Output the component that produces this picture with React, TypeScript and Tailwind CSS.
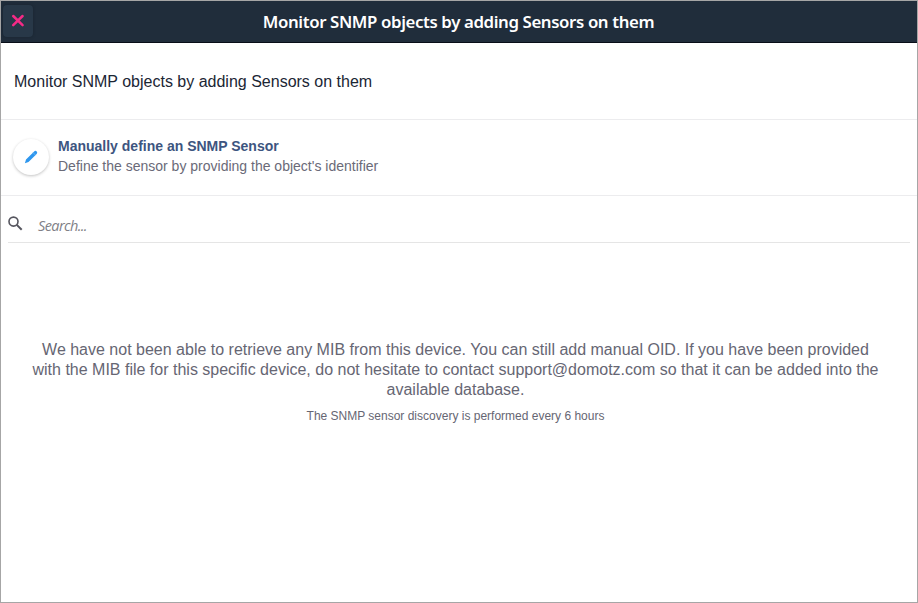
import React from "react";

function Header() {
  return (
    <header className="flex h-[42px] shrink-0 items-center border-b border-[#080e18] bg-[#202d3b]">
      <button
        aria-label="Close"
        className="ml-[2px] mb-[2px] flex h-8 w-[30px] items-center justify-center rounded-[4px] bg-[#283848] shadow-[0_0_3px_rgba(10,20,30,0.35)]"
      >
        <svg width="14" height="14" viewBox="0 0 14 14" fill="none" stroke="#f52a86" strokeWidth="2.500" strokeLinecap="round">
          <path d="M2.200 2 11.600 11.200M11.600 2 2.200 11.200" />
        </svg>
      </button>
      <h1 className="mt-px mr-[33px] flex-1 text-center font-['Noto_Sans',sans-serif] text-[16.8px] leading-6 font-semibold tracking-[-0.37px] whitespace-nowrap text-white">
        Monitor SNMP objects by adding Sensors on them
      </h1>
    </header>
  );
}

function ManualSensor() {
  return (
    <section className="flex h-[76px] shrink-0 items-center border-b border-[#ececee] pb-[2px] pl-3">
      <div className="flex size-9 items-center justify-center rounded-full bg-white shadow-[0_1px_3px_rgba(0,0,0,0.24)]">
        <svg width="16" height="16" viewBox="0 0 16 16" fill="#2f97ee">
          <path d="M1.900 14.200 3 10.500 10.900 2.700c1-1 2-1.100 2.800-.3s.7 1.800-.3 2.800L5.500 13z" />
          <path d="m10 3.600 2.500 2.500" fill="none" stroke="#78bdf5" strokeWidth=".7" />
        </svg>
      </div>
      <div className="mb-px ml-[9px]">
        <h2 className="text-[14px] leading-5 font-bold whitespace-nowrap text-[#3d5580]">Manually define an SNMP Sensor</h2>
        <p className="text-[14px] leading-5 whitespace-nowrap text-[#6a6a78]">Define the sensor by providing the object's identifier</p>
      </div>
    </section>
  );
}

function Search() {
  return (
    <label className="mx-[7px] flex h-[47px] shrink-0 items-center border-b border-[#e5e5e5] pt-[14px]">
      <svg width="16" height="16" viewBox="0 0 16 16" fill="none" stroke="#55555e" className="mb-[4px]">
        <circle cx="5.500" cy="5.600" r="4.500" strokeWidth="1.600" />
        <path d="m8.800 8.900 4.900 4.900" strokeWidth="2" />
      </svg>
      <span className="mb-px ml-[14px] font-['Open_Sans',sans-serif] text-[14.5px] leading-5 tracking-[-0.6px] text-[#808086] italic">Search...</span>
    </label>
  );
}

export default function App() {
  return (
    <main className="flex h-[603px] w-[918px] flex-col border border-[#a6a6a6] bg-white font-['Liberation_Sans',Arial,sans-serif]">
      <Header />
      <section className="flex h-[77px] shrink-0 items-center border-b border-[#ececee] pt-[2px] pl-[13px]">
        <p className="text-base leading-5 whitespace-nowrap text-[#1b2634]">Monitor SNMP objects by adding Sensors on them</p>
      </section>
      <ManualSensor />
      <Search />
      <section className="mt-[97px] mr-[7px] flex flex-col items-center text-center text-[#666673]">
        <p className="text-base leading-5 whitespace-nowrap">
          We have not been able to retrieve any MIB from this device. You can still add manual OID. If you have been provided
          <br />
          with the MIB file for this specific device, do not hesitate to contact support@domotz.com so that it can be added into the
          <br />
          available database.
        </p>
        <p className="mt-[6px] text-[12px] leading-5 whitespace-nowrap">The SNMP sensor discovery is performed every 6 hours</p>
      </section>
    </main>
  );
}
